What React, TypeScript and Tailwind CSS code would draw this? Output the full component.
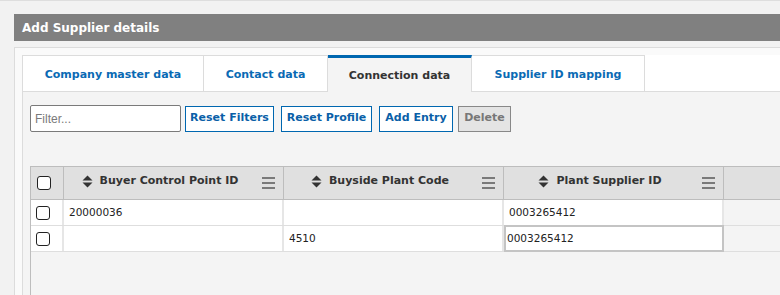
import React from "react";

const font = { fontFamily: '"DejaVu Sans", Verdana, sans-serif' };

const tabs = [
  { label: "Company master data", width: "w-[181px]" },
  { label: "Contact data", width: "w-[124px]" },
  { label: "Connection data", width: "w-[144px]", active: true },
  { label: "Supplier ID mapping", width: "w-[173px]" },
];

const columns = ["Buyer Control Point ID", "Buyside Plant Code", "Plant Supplier ID"];

const rows = [
  ["20000036", "", "0003265412"],
  ["", "4510", "0003265412"],
];

const Checkbox: React.FC = () => (
  <div className="w-[14px] h-[14px] rounded-[3px] border-[1.5px] border-[#222] bg-white" />
);

const SortIcon: React.FC = () => (
  <svg width="11" height="13" viewBox="0 0 11 13" className="shrink-0">
    <path d="M5.5 0.5 L10.5 5.5 H0.5 Z" fill="#333" />
    <path d="M5.5 12.5 L10.5 7.5 H0.5 Z" fill="#333" />
  </svg>
);

const MenuIcon: React.FC = () => (
  <div className="flex flex-col gap-[3px] w-[13px]">
    <div className="h-[2px] bg-[#7a7a7a]" />
    <div className="h-[2px] bg-[#7a7a7a]" />
    <div className="h-[2px] bg-[#7a7a7a]" />
  </div>
);

const App: React.FC = () => {
  return (
    <div
      className="w-[780px] h-[295px] overflow-hidden bg-[#f2f2f2] border-t border-[#dedede]"
      style={font}
    >
      <div className="ml-[14px] mt-[13px]">
        {/* title bar */}
        <div className="h-[27px] bg-[#808080] flex items-center pl-[8px] text-white font-bold text-[12px]">
          Add Supplier details
        </div>

        <div className="mt-[6px] border-t border-l border-[#dcdcdc] bg-[#fafafa] pl-[7px] pt-[7px] h-[260px]">
          <div className="border-l border-[#dcdcdc] h-full flex flex-col">
            {/* tabs */}
            <div className="flex h-[37px] border-b border-[#dcdcdc] bg-white">
              {tabs.map((t) =>
                t.active ? (
                  <div
                    key={t.label}
                    className={`${t.width} -mb-px flex items-center justify-center bg-[#f4f4f4] border-t-[3px] border-t-[#0067b0] border-r border-r-[#dcdcdc] text-[11px] font-bold text-[#333] pt-[3px]`}
                  >
                    {t.label}
                  </div>
                ) : (
                  <div
                    key={t.label}
                    className={`${t.width} flex items-center justify-center bg-white border-t border-r border-[#dcdcdc] text-[11px] font-bold text-[#0a6ab4] pt-[3px]`}
                  >
                    {t.label}
                  </div>
                )
              )}
              <div className="flex-1 bg-white" />
            </div>

            {/* content */}
            <div className="flex-1 bg-[#f4f4f4] pl-[7px] pt-[13px]">
              <div className="flex items-center h-[27px]">
                <input
                  placeholder="Filter..."
                  className="w-[151px] h-[27px] border border-[#7a7a7a] rounded-[2px] bg-white pl-[4px] text-[12px] text-[#333] placeholder:text-[#7a7a7a] outline-none"
                  style={{ fontFamily: '"Liberation Sans", Arial, sans-serif' }}
                />
                <button className="ml-[4px] w-[89px] h-[26px] border border-[#0067b0] bg-white text-[#0a5fa8] font-bold text-[11px]">
                  Reset Filters
                </button>
                <button className="ml-[7px] w-[91px] h-[26px] border border-[#0067b0] bg-white text-[#0a5fa8] font-bold text-[11px]">
                  Reset Profile
                </button>
                <button className="ml-[7px] w-[74px] h-[26px] border border-[#0067b0] bg-white text-[#0a5fa8] font-bold text-[11px]">
                  Add Entry
                </button>
                <button className="ml-[5px] w-[53px] h-[26px] border border-[#888] bg-[#e4e4e4] text-[#777] font-bold text-[11px]">
                  Delete
                </button>
              </div>

              {/* grid */}
              <div className="mt-[34px] border-t border-l border-[#bdbdbd] h-[140px] bg-[#f4f4f4]">
                <div className="flex h-[33px] bg-[#e0e0e0] border-b border-[#bdbdbd]">
                  <div className="w-[33px] border-r border-[#bdbdbd] flex items-center pl-[6px]">
                    <Checkbox />
                  </div>
                  {columns.map((c) => (
                    <div
                      key={c}
                      className="w-[220px] border-r border-[#bdbdbd] flex items-center"
                    >
                      <div className="flex-1 flex items-center justify-center gap-[7px] pl-[2px] -mt-[4px]">
                        <SortIcon />
                        <span className="text-[11px] font-bold text-[#333]">{c}</span>
                      </div>
                      <div className="w-[21px] pr-[8px] box-content flex justify-end">
                        <MenuIcon />
                      </div>
                    </div>
                  ))}
                  <div className="flex-1" />
                </div>

                {rows.map((r, i) => (
                  <div key={i} className="flex h-[26px] border-b border-[#dedede]">
                    <div className="w-[33px] bg-white border-r-2 border-[#e6e6e6] flex items-center pl-[5px]">
                      <Checkbox />
                    </div>
                    {r.map((v, j) => {
                      const focused = i === 1 && j === 2;
                      return (
                        <div
                          key={j}
                          className={
                            focused
                              ? "w-[220px] bg-white border-2 border-[#c4c4c4] -mt-px h-[27px] flex items-center pl-[1px] text-[10.5px] text-[#222]"
                              : "w-[220px] bg-white border-r-2 border-[#e6e6e6] flex items-center pl-[5px] text-[10.5px] text-[#222]"
                          }
                        >
                          {v}
                        </div>
                      );
                    })}
                  </div>
                ))}
              </div>
            </div>
          </div>
        </div>
      </div>
    </div>
  );
};

export default App;
